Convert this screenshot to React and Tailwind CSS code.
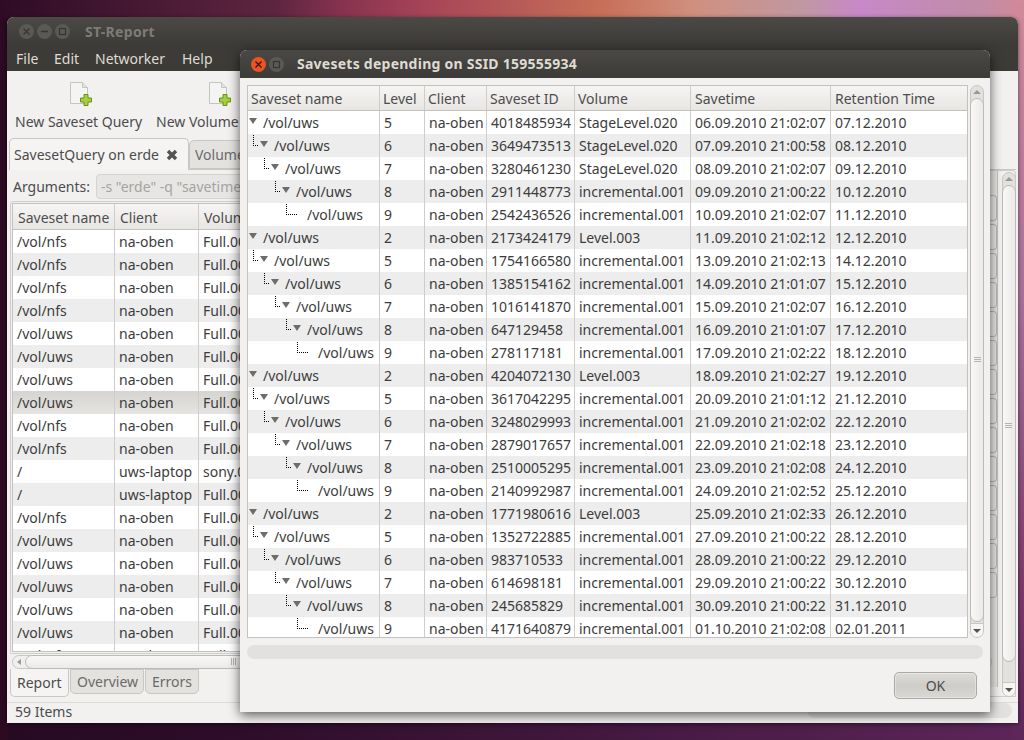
import React from 'react';

const FONT = "font-['Noto_Sans','Open_Sans',sans-serif]";

const DEPENDENT_ROWS = [
  ['0', '5', '4018485934', 'StageLevel.020', '06.09.2010 21:02:07', '07.12.2010'],
  ['1', '6', '3649473513', 'StageLevel.020', '07.09.2010 21:00:58', '08.12.2010'],
  ['2', '7', '3280461230', 'StageLevel.020', '08.09.2010 21:02:07', '09.12.2010'],
  ['3', '8', '2911448773', 'incremental.001', '09.09.2010 21:00:22', '10.12.2010'],
  ['4', '9', '2542436526', 'incremental.001', '10.09.2010 21:02:07', '11.12.2010'],
  ['0', '2', '2173424179', 'Level.003', '11.09.2010 21:02:12', '12.12.2010'],
  ['1', '5', '1754166580', 'incremental.001', '13.09.2010 21:02:13', '14.12.2010'],
  ['2', '6', '1385154162', 'incremental.001', '14.09.2010 21:01:07', '15.12.2010'],
  ['3', '7', '1016141870', 'incremental.001', '15.09.2010 21:02:07', '16.12.2010'],
  ['4', '8', '647129458', 'incremental.001', '16.09.2010 21:01:07', '17.12.2010'],
  ['5', '9', '278117181', 'incremental.001', '17.09.2010 21:02:22', '18.12.2010'],
  ['0', '2', '4204072130', 'Level.003', '18.09.2010 21:02:27', '19.12.2010'],
  ['1', '5', '3617042295', 'incremental.001', '20.09.2010 21:01:12', '21.12.2010'],
  ['2', '6', '3248029993', 'incremental.001', '21.09.2010 21:02:02', '22.12.2010'],
  ['3', '7', '2879017657', 'incremental.001', '22.09.2010 21:02:18', '23.12.2010'],
  ['4', '8', '2510005295', 'incremental.001', '23.09.2010 21:02:08', '24.12.2010'],
  ['5', '9', '2140992987', 'incremental.001', '24.09.2010 21:02:52', '25.12.2010'],
  ['0', '2', '1771980616', 'Level.003', '25.09.2010 21:02:33', '26.12.2010'],
  ['1', '5', '1352722885', 'incremental.001', '27.09.2010 21:00:22', '28.12.2010'],
  ['2', '6', '983710533', 'incremental.001', '28.09.2010 21:00:22', '29.12.2010'],
  ['3', '7', '614698181', 'incremental.001', '29.09.2010 21:00:22', '30.12.2010'],
  ['4', '8', '245685829', 'incremental.001', '30.09.2010 21:00:22', '31.12.2010'],
  ['5', '9', '4171640879', 'incremental.001', '01.10.2010 21:02:08', '02.01.2011'],
];

const QUERY_ROWS = [
  ['/vol/nfs', 'na-oben', 'Full.001'],
  ['/vol/nfs', 'na-oben', 'Full.001'],
  ['/vol/nfs', 'na-oben', 'Full.001'],
  ['/vol/nfs', 'na-oben', 'Full.001'],
  ['/vol/uws', 'na-oben', 'Full.001'],
  ['/vol/uws', 'na-oben', 'Full.001'],
  ['/vol/uws', 'na-oben', 'Full.001'],
  ['/vol/uws', 'na-oben', 'Full.001'],
  ['/vol/nfs', 'na-oben', 'Full.001'],
  ['/vol/nfs', 'na-oben', 'Full.001'],
  ['/', 'uws-laptop', 'sony.001'],
  ['/', 'uws-laptop', 'Full.001'],
  ['/vol/nfs', 'na-oben', 'Full.001'],
  ['/vol/uws', 'na-oben', 'Full.001'],
  ['/vol/uws', 'na-oben', 'Full.001'],
  ['/vol/uws', 'na-oben', 'Full.001'],
  ['/vol/uws', 'na-oben', 'Full.001'],
  ['/vol/uws', 'na-oben', 'Full.001'],
  ['/vol/nfs', 'na-oben', 'Full.001'],
];

const SIDE_BUTTONS = [195, 224, 253, 282, 311, 340, 369, 398, 427, 456, 485, 514, 543, 572];

// ── Small drawings ────────────────────────────────────────────────────────────
function NewDocIcon({ className }) {
  return (
    <svg className={className} width="22" height="25" viewBox="0 0 22 25">
      <path d="M.5 1.500h12l5 5v16H.5z" fill="#f4f4f2" stroke="#c4c4c0" />
      <path d="M12.500 1.500v5h5" fill="#e2e2de" stroke="#c4c4c0" />
      <path d="M14 13.500h4v3.500h3.500v4H18v3.500h-4V21h-3.500v-4H14z" fill="#a5cf3c" stroke="#6b8f1e" />
    </svg>
  );
}

function WindowButton({ kind, active }) {
  const glyph = active ? 'text-[#3a1208]' : 'text-[#36352f]';
  return (
    <span className={`flex h-[15px] w-[15px] items-center justify-center rounded-full ${active ? 'bg-[#e9541f]' : 'bg-[#5a5955]'}`}>
      <svg className={glyph} width="9" height="9" viewBox="0 0 9 9" fill="none" stroke="currentColor">
        {kind === 'close' && <path d="M1.500 1.500l6 6M7.500 1.500l-6 6" strokeWidth="1.200" />}
        {kind === 'min' && <path d="M1 4.500h7" strokeWidth="1.500" />}
        {kind === 'max' && <rect x="1.500" y="1.500" width="6" height="6" strokeWidth="1.200" />}
      </svg>
    </span>
  );
}

function CloseTabIcon({ className }) {
  return (
    <svg className={className} width="12" height="12" viewBox="0 0 12 12" fill="none" stroke="#55534f" strokeWidth="3.400">
      <path d="M2 2l8 8M10 2l-8 8" />
    </svg>
  );
}

function Arrow({ up, className }) {
  return (
    <span className={`h-0 w-0 border-x-[4px] border-x-transparent ${up ? 'border-b-[4px] border-b-[#9a9894]' : 'border-t-[4px] border-t-[#55534f]'} ${className || ''}`} />
  );
}

function Grip({ vertical, className }) {
  return (
    <span className={`absolute flex gap-[1px] ${vertical ? 'flex-col' : ''} ${className}`}>
      <span className={vertical ? 'h-[1px] w-[7px] bg-[#b5b3af]' : 'h-[7px] w-[1px] bg-[#b5b3af]'} />
      <span className={vertical ? 'h-[1px] w-[7px] bg-[#b5b3af]' : 'h-[7px] w-[1px] bg-[#b5b3af]'} />
      <span className={vertical ? 'h-[1px] w-[7px] bg-[#b5b3af]' : 'h-[7px] w-[1px] bg-[#b5b3af]'} />
    </span>
  );
}

function VScrollbar({ className, thumbBottom, grip }) {
  return (
    <div className={`absolute w-[14px] rounded-full border border-[#c9c7c3] bg-[#e3e1de] ${className}`}>
      <div className="flex h-[13px] items-center justify-center pb-[1px]">
        <Arrow up />
      </div>
      <div className={`absolute inset-x-[-1px] top-[12px] rounded-full border border-[#bdbbb7] bg-gradient-to-r from-[#f8f8f7] to-[#eceae8] ${thumbBottom}`}>
        <Grip vertical className={grip} />
      </div>
      <div className="absolute inset-x-0 bottom-0 flex h-[14px] items-center justify-center rounded-b-full border-t border-[#c9c7c3] bg-[#f6f5f4]">
        <Arrow />
      </div>
    </div>
  );
}

// ── Saveset tree (dialog) ─────────────────────────────────────────────────────
function TreeCell({ depth, leaf }) {
  return (
    <div className="relative h-full w-[132px] shrink-0 border-r border-[#cfcdca]">
      {depth > 0 && (
        <span
          className={`absolute top-[1px] h-[11px] border-b border-l border-dotted border-black ${leaf ? 'w-[11px]' : 'w-[5px]'}`}
          style={{ left: 5 + (depth - 1) * 11 }}
        />
      )}
      {!leaf && (
        <span
          className="absolute top-[7px] h-0 w-0 border-x-[4px] border-t-[6px] border-x-transparent border-t-[#6d6c69]"
          style={{ left: 1 + depth * 11 }}
        />
      )}
      <span className="absolute leading-[23px]" style={{ left: 15 + depth * 11 }}>/vol/uws</span>
    </div>
  );
}

function SavesetTree() {
  return (
    <div className="absolute left-[7px] top-[35px] h-[553px] w-[721px] overflow-hidden border border-[#c4c2be] bg-white">
      <div className="flex h-[25px] border-b border-[#c4c2be] bg-gradient-to-b from-[#f6f5f4] to-[#e8e6e3] leading-[25px] text-[#4d4d4d]">
        <span className="w-[132px] shrink-0 border-r border-[#cfcdca] pl-[3px]">Saveset name</span>
        <span className="w-[45px] shrink-0 border-r border-[#cfcdca] pl-[3px]">Level</span>
        <span className="w-[62px] shrink-0 border-r border-[#cfcdca] pl-[3px]">Client</span>
        <span className="w-[88px] shrink-0 border-r border-[#cfcdca] pl-[3px]">Saveset ID</span>
        <span className="w-[116px] shrink-0 border-r border-[#cfcdca] pl-[3px]">Volume</span>
        <span className="w-[140px] shrink-0 border-r border-[#cfcdca] pl-[4px]">Savetime</span>
        <span className="pl-[4px]">Retention Time</span>
      </div>
      {DEPENDENT_ROWS.map((r, i) => {
        const depth = Number(r[0]);
        const next = DEPENDENT_ROWS[i + 1];
        const leaf = !next || Number(next[0]) <= depth;
        return (
          <div key={r[2]} className={`flex h-[23px] leading-[23px] text-[#3c3c3c] ${i % 2 ? 'bg-[#ededed]' : 'bg-white'}`}>
            <TreeCell depth={depth} leaf={leaf} />
            <span className="w-[45px] shrink-0 border-r border-[#cfcdca] pl-[4px]">{r[1]}</span>
            <span className="w-[62px] shrink-0 border-r border-[#cfcdca] pl-[4px]">na-oben</span>
            <span className="w-[88px] shrink-0 border-r border-[#cfcdca] pl-[4px]">{r[2]}</span>
            <span className="w-[116px] shrink-0 border-r border-[#cfcdca] pl-[4px]">{r[3]}</span>
            <span className="w-[140px] shrink-0 border-r border-[#cfcdca] pl-[4px]">{r[4]}</span>
            <span className="pl-[4px]">{r[5]}</span>
          </div>
        );
      })}
    </div>
  );
}

function DependentsDialog() {
  return (
    <div className="absolute left-[240px] top-[50px] h-[662px] w-[750px] rounded-t-[7px] bg-[#f2f1f0] shadow-[0_3px_12px_rgba(0,0,0,0.65)]">
      <div className="flex h-[28px] items-center rounded-t-[7px] bg-gradient-to-b from-[#4a4945] to-[#3c3b37] pl-[11px]">
        <WindowButton kind="close" active />
        <span className="ml-[3px]"><WindowButton kind="max" /></span>
        <span className="ml-[13px] mt-[-2px] text-[14px] font-bold tracking-[0.25px] text-[#dfdbd2]">
          Savesets depending on SSID 159555934
        </span>
      </div>
      <SavesetTree />
      <VScrollbar className="left-[730px] top-[35px] h-[553px]" thumbBottom="bottom-[15px]" grip="left-[3px] top-[258px]" />
      <div className="absolute left-[7px] top-[595px] h-[14px] w-[736px] rounded-full bg-[#e2e1df]" />
      <div className="absolute left-[654px] top-[622px] flex h-[27px] w-[83px] items-center justify-center rounded-[5px] border border-[#aaa8a4] bg-gradient-to-b from-[#dedcd9] via-[#cfcdca] to-[#dad8d5] text-[#4c4c4c] shadow-[inset_0_0_0_1px_rgba(255,255,255,0.35)]">
        OK
      </div>
    </div>
  );
}

// ── Main window ───────────────────────────────────────────────────────────────
function QueryTable() {
  return (
    <>
      <div className="absolute left-[3px] top-[184px] h-[453px] w-[985px] rounded-t-[3px] border border-[#d0cecb]" />
      <div className="absolute left-[5px] top-[186px] h-[449px] w-[983px] overflow-hidden border border-[#c4c2be] bg-white">
        <div className="flex h-[26px] border-b border-[#c4c2be] bg-gradient-to-b from-[#f6f5f4] to-[#e8e6e3] leading-[27px] text-[#4d4d4d]">
          <span className="w-[102px] shrink-0 border-r border-[#cfcdca] pl-[5px]">Saveset name</span>
          <span className="w-[84px] shrink-0 border-r border-[#cfcdca] pl-[5px]">Client</span>
          <span className="pl-[5px]">Volume</span>
        </div>
        {QUERY_ROWS.map((r, i) => {
          const selected = i === 7;
          const zebra = i % 2 ? 'bg-[#ededed]' : 'bg-white';
          return (
            <div
              key={i}
              className={`flex h-[23px] leading-[23px] text-[#3c3c3c] ${selected ? 'bg-gradient-to-b from-[#d6d4d0] to-[#e6e4e1]' : zebra}`}
            >
              <span className="w-[102px] shrink-0 border-r border-[#cfcdca] pl-[4px]">{r[0]}</span>
              <span className="w-[84px] shrink-0 border-r border-[#cfcdca] pl-[4px]">{r[1]}</span>
              <span className="pl-[4px]">{r[2]}</span>
            </div>
          );
        })}
      </div>
    </>
  );
}

function MainWindow() {
  return (
    <div className="absolute left-[7px] top-[17px] h-[706px] w-[1011px] rounded-t-[7px] bg-[#f2f1f0] shadow-[0_1px_4px_rgba(0,0,0,0.5)]">
      <div className="flex h-[28px] items-center rounded-t-[7px] bg-gradient-to-b from-[#4a4945] to-[#3c3b37] pl-[12px]">
        <WindowButton kind="close" />
        <span className="ml-[3px]"><WindowButton kind="min" /></span>
        <span className="ml-[3px]"><WindowButton kind="max" /></span>
        <span className="ml-[15px] text-[14px] font-bold tracking-[0.3px] text-[#7d7c76]">ST-Report</span>
      </div>
      <div className="relative h-[26px] bg-[#3c3b37] leading-[27px] text-[#dfdbd2]">
        <span className="absolute left-[9px]">File</span>
        <span className="absolute left-[47px]">Edit</span>
        <span className="absolute left-[88px]">Networker</span>
        <span className="absolute left-[175px]">Help</span>
      </div>

      {/* Toolbar */}
      <NewDocIcon className="absolute left-[63px] top-[64px]" />
      <NewDocIcon className="absolute left-[202px] top-[64px]" />
      <span className="absolute left-[8px] top-[95px] leading-[20px] text-[#4c4c4c]">New Saveset Query</span>
      <span className="absolute left-[149px] top-[95px] leading-[20px] text-[#4c4c4c]">New Volume Query</span>

      {/* Top tabs */}
      <div className="absolute left-[2px] top-[121px] flex h-[32px] w-[180px] items-center rounded-t-[5px] border border-b-0 border-[#c9c7c3] bg-[#f5f4f3] pl-[4px] text-[#4c4c4c]">
        SavesetQuery on erde
        <CloseTabIcon className="ml-[7px]" />
      </div>
      <div className="absolute left-[182px] top-[123px] flex h-[29px] w-[120px] items-center rounded-t-[5px] border border-[#c9c7c3] bg-[#e4e2df] pl-[5px] text-[#6a6a6a]">
        Volume
      </div>
      <div className="absolute left-[182px] right-[2px] top-[152px] h-[1px] bg-[#c9c7c3]" />

      {/* Arguments */}
      <span className="absolute left-[6px] top-[160px] leading-[20px] text-[#4c4c4c]">Arguments:</span>
      <div className="absolute left-[89px] top-[157px] h-[25px] w-[400px] overflow-hidden whitespace-nowrap rounded-[4px] border border-[#d5d3cf] bg-[#e8e6e4] pl-[4px] text-[14px] leading-[23px] text-[#a5a3a0]">
        -s "erde" -q "savetime
      </div>

      <QueryTable />

      {/* Right edge: stacked buttons and the table scrollbar */}
      <div className="absolute left-[983px] top-[153px] h-[527px] w-[26px] rounded-tr-[4px] border border-l-0 border-[#d0cecb]" />
      <div className="absolute left-[983px] top-[154px] h-[516px] w-[8px] border-r border-[#c4c2be] bg-[#e8e6e3]" />
      {SIDE_BUTTONS.map((y) => (
        <div key={y} className="absolute left-[983px] h-[26px] w-[7px] rounded-r-[4px] border border-l-0 border-[#b9b7b3] bg-[#ebe9e7]" style={{ top: y - 17 }} />
      ))}
      <VScrollbar className="left-[995px] top-[155px] h-[525px]" thumbBottom="bottom-[34px]" grip="left-[2px] top-[237px]" />

      {/* Bottom horizontal scrollbar */}
      <div className="absolute left-[5px] top-[638px] h-[14px] w-[980px] rounded-full border border-[#c9c7c3] bg-[#f0efed]">
        <span className="absolute left-[4px] top-[3px] h-0 w-0 border-y-[3px] border-r-[4px] border-y-transparent border-r-[#9a9894]" />
        <div className="absolute inset-y-[-1px] left-[12px] right-[2px] rounded-full border border-[#bdbbb7] bg-gradient-to-b from-[#f8f8f7] to-[#eceae8]">
          <Grip className="left-[205px] top-[2px]" />
        </div>
      </div>

      {/* Bottom tabs */}
      <div className="absolute left-[3px] top-[652px] flex h-[28px] w-[59px] items-center rounded-b-[5px] border border-t-0 border-[#c9c7c3] bg-[#f5f4f3] pl-[6px] text-[#4c4c4c]">
        Report
      </div>
      <div className="absolute left-[63px] top-[652px] flex h-[25px] w-[74px] items-center rounded-b-[5px] border border-[#c9c7c3] bg-[#e4e2df] pl-[6px] text-[#6a6a6a]">
        Overview
      </div>
      <div className="absolute left-[138px] top-[652px] flex h-[25px] w-[54px] items-center rounded-b-[5px] border border-[#c9c7c3] bg-[#e4e2df] pl-[6px] text-[#6a6a6a]">
        Errors
      </div>

      {/* Status bar */}
      <div className="absolute left-0 right-0 top-[685px] h-[1px] bg-[#dcdad7]" />
      <span className="absolute left-[8px] top-[685px] leading-[20px] text-[#4c4c4c]">59 Items</span>
      <div className="absolute left-[800px] top-[686px] h-[15px] w-[205px] rounded-full bg-[#e2e1df]" />
    </div>
  );
}

export default function App() {
  return (
    <div className={`relative h-[740px] w-[1024px] overflow-hidden bg-[linear-gradient(90deg,#250a22_0%,#2e0d2a_25%,#5c2658_100%)] text-[14px] ${FONT}`}>
      {/* Wallpaper strips that show around the windows */}
      <div className="absolute inset-x-0 top-0 h-[40px] bg-[linear-gradient(90deg,#2f0c26_0%,#5e2540_27%,#8a3450_34%,#a84558_42%,#c87058_59%,#d09080_68%,#c098a0_78%,#c888c8_84%,#c08ca8_95%,#d08a9a_100%)]" />
      <div className="absolute right-0 top-0 h-[740px] w-[12px] bg-[linear-gradient(180deg,#d08a9a_0%,#a8709a_40%,#7a3a6a_80%,#5c2658_100%)]" />
      <div className="absolute left-0 top-[18px] h-[722px] w-[8px] bg-[#2c0a22]" />
      <MainWindow />
      <DependentsDialog />
    </div>
  );
}
